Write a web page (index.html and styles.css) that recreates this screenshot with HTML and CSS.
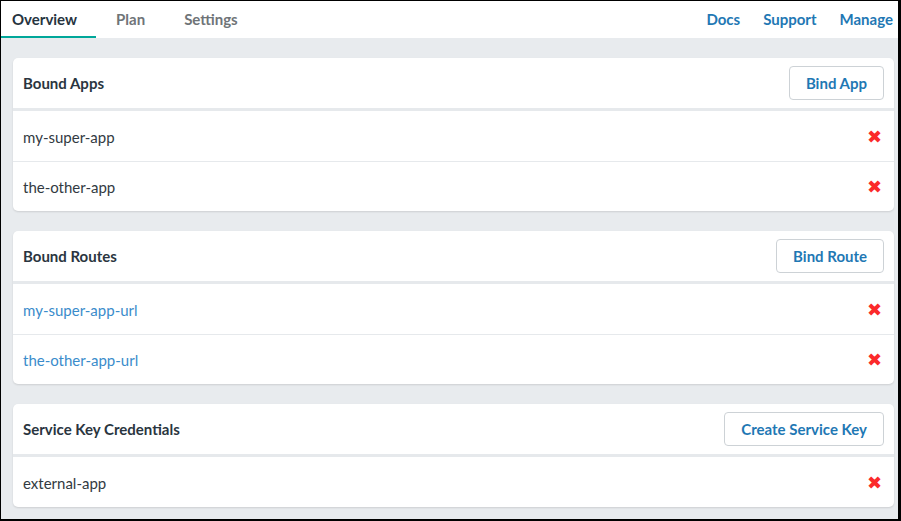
FILE: index.html
```html
<!DOCTYPE html>
<html>
<head>
<meta charset="utf-8">
<link rel="stylesheet" href="styles.css">
</head>
<body>
<div class="frame">
  <nav class="topnav">
    <div class="tabs">
      <a class="tab active">Overview</a>
      <a class="tab">Plan</a>
      <a class="tab">Settings</a>
    </div>
    <div class="links">
      <a class="link">Docs</a>
      <a class="link">Support</a>
      <a class="link">Manage</a>
    </div>
  </nav>
  <main class="content">
    <section class="card">
      <header class="card-head">
        <h2 class="card-title">Bound Apps</h2>
        <button class="btn">Bind App</button>
      </header>
      <div class="row"><span class="name">my-super-app</span><span class="del">&#10006;</span></div>
      <div class="row"><span class="name">the-other-app</span><span class="del">&#10006;</span></div>
    </section>
    <section class="card">
      <header class="card-head">
        <h2 class="card-title">Bound Routes</h2>
        <button class="btn">Bind Route</button>
      </header>
      <div class="row"><a class="name route">my-super-app-url</a><span class="del">&#10006;</span></div>
      <div class="row"><a class="name route">the-other-app-url</a><span class="del">&#10006;</span></div>
    </section>
    <section class="card">
      <header class="card-head">
        <h2 class="card-title">Service Key Credentials</h2>
        <button class="btn">Create Service Key</button>
      </header>
      <div class="row"><span class="name">external-app</span><span class="del">&#10006;</span></div>
    </section>
  </main>
</div>
</body>
</html>
```

FILE: styles.css
```css
* { box-sizing: border-box; }
html, body { margin: 0; padding: 0; }
body {
  font-family: "Lato", "Liberation Sans", sans-serif;
  background: #fff;
  width: 901px;
  height: 521px;
  overflow: hidden;
}
.frame {
  width: 901px;
  height: 521px;
  border-style: solid;
  border-color: #000;
  border-width: 1px 3px 2px 1px;
  background: #e8ebee;
  display: flex;
  flex-direction: column;
}
.topnav {
  height: 37px;
  background: #fff;
  display: flex;
  justify-content: space-between;
  align-items: stretch;
  font-size: 15px;
  font-weight: 700;
}
.tabs { display: flex; }
.tab {
  display: flex;
  align-items: center;
  padding: 0 19px 0 20px;
  color: #6f7478;
  border-bottom: 2px solid transparent;
}
.tab.active {
  padding-left: 11px;
  color: #263440;
  border-bottom-color: #00a79a;
}
.links { display: flex; gap: 23px; padding-right: 5px; }
.link {
  display: flex;
  align-items: center;
  color: #1f78b4;
  padding-bottom: 2px;
}
.content {
  padding: 20px 4px 0 12px;
  display: flex;
  flex-direction: column;
  gap: 20px;
}
.card {
  background: #fff;
  border-radius: 5px;
  box-shadow: 0 1px 2px rgba(0,0,0,0.12);
  overflow: hidden;
}
.card-head {
  height: 53px;
  display: flex;
  align-items: center;
  justify-content: space-between;
  padding: 0 10px;
  border-bottom: 3px solid #e6e9ec;
}
.card-title {
  margin: 0;
  font-size: 15px;
  font-weight: 700;
  color: #2a3540;
}
.btn {
  font-family: inherit;
  font-size: 15px;
  font-weight: 700;
  color: #1f78b4;
  background: #fff;
  border: 1px solid #cdd2d6;
  border-radius: 4px;
  height: 34px;
  padding: 0 16px;
}
.row {
  height: 50px;
  display: flex;
  align-items: center;
  justify-content: space-between;
  padding: 1px 12px 0 10px;
  font-size: 15px;
  color: #323a42;
}
.row + .row { border-top: 1px solid #e6e9ec; }
.route { color: #3a8ccb; }
.del {
  color: #fb2a2a;
  font-size: 18px;
  line-height: 1;
  font-family: "DejaVu Sans", sans-serif;
}
```
